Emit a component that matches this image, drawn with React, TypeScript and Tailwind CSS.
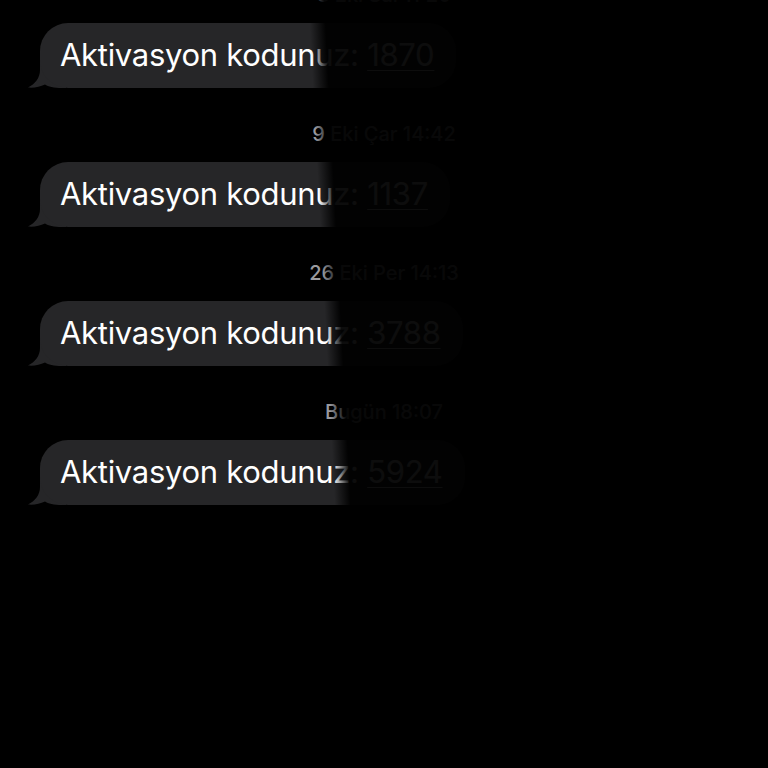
import React from "react";

const groups = [
  { date: "8 Eki Sal 11:20", code: "1870" },
  { date: "9 Eki Çar 14:42", code: "1137" },
  { date: "26 Eki Per 14:13", code: "3788" },
  { date: "Bugün 18:07", code: "5924" },
];

function Tail() {
  return (
    <svg
      className="absolute left-[-12px] bottom-0"
      width="38"
      height="30"
      viewBox="0 0 38 30"
    >
      <path
        d="M12 0 L12 12 C12 20 7 26 0 29.5 C6 30 12 29 17 26.5 C20 28.5 26 30 34 30 L38 30 L38 0 Z"
        fill="#262628"
      />
    </svg>
  );
}

function Bubble({ code }: { code: string }) {
  return (
    <div className="relative ml-[40px] self-start">
      <Tail />
      <div className="relative h-[65px] rounded-[28px] bg-[#262628] pl-[20px] pr-[22px] flex items-center">
        <span className="text-white text-[31px] tracking-[-0.3px] whitespace-nowrap font-['Inter','Liberation_Sans',sans-serif]">
          Aktivasyon kodunuz: <span className="underline decoration-1 underline-offset-4">{code}</span>
        </span>
      </div>
    </div>
  );
}

export default function App() {
  return (
    <div className="relative w-full h-[768px] bg-black overflow-hidden">
      <div className="flex flex-col mt-[-18px]">
        {groups.map((g, i) => (
          <div key={i} className={"flex flex-col " + (i > 0 ? "mt-[33px]" : "")}>
            <div className="h-[22px] leading-[26px] text-center text-[20px] font-medium text-[#9a9a9f] font-['Inter','Liberation_Sans',sans-serif]">
              {g.date}
            </div>
            <div className="mt-[19px] flex">
              <Bubble code={g.code} />
            </div>
          </div>
        ))}
      </div>
      <div className="absolute inset-0 bg-[linear-gradient(87deg,rgba(0,0,0,0)_0px,rgba(0,0,0,0)_348px,rgba(0,0,0,0.95)_364px,rgba(0,0,0,0.95)_100%)]" />
    </div>
  );
}
